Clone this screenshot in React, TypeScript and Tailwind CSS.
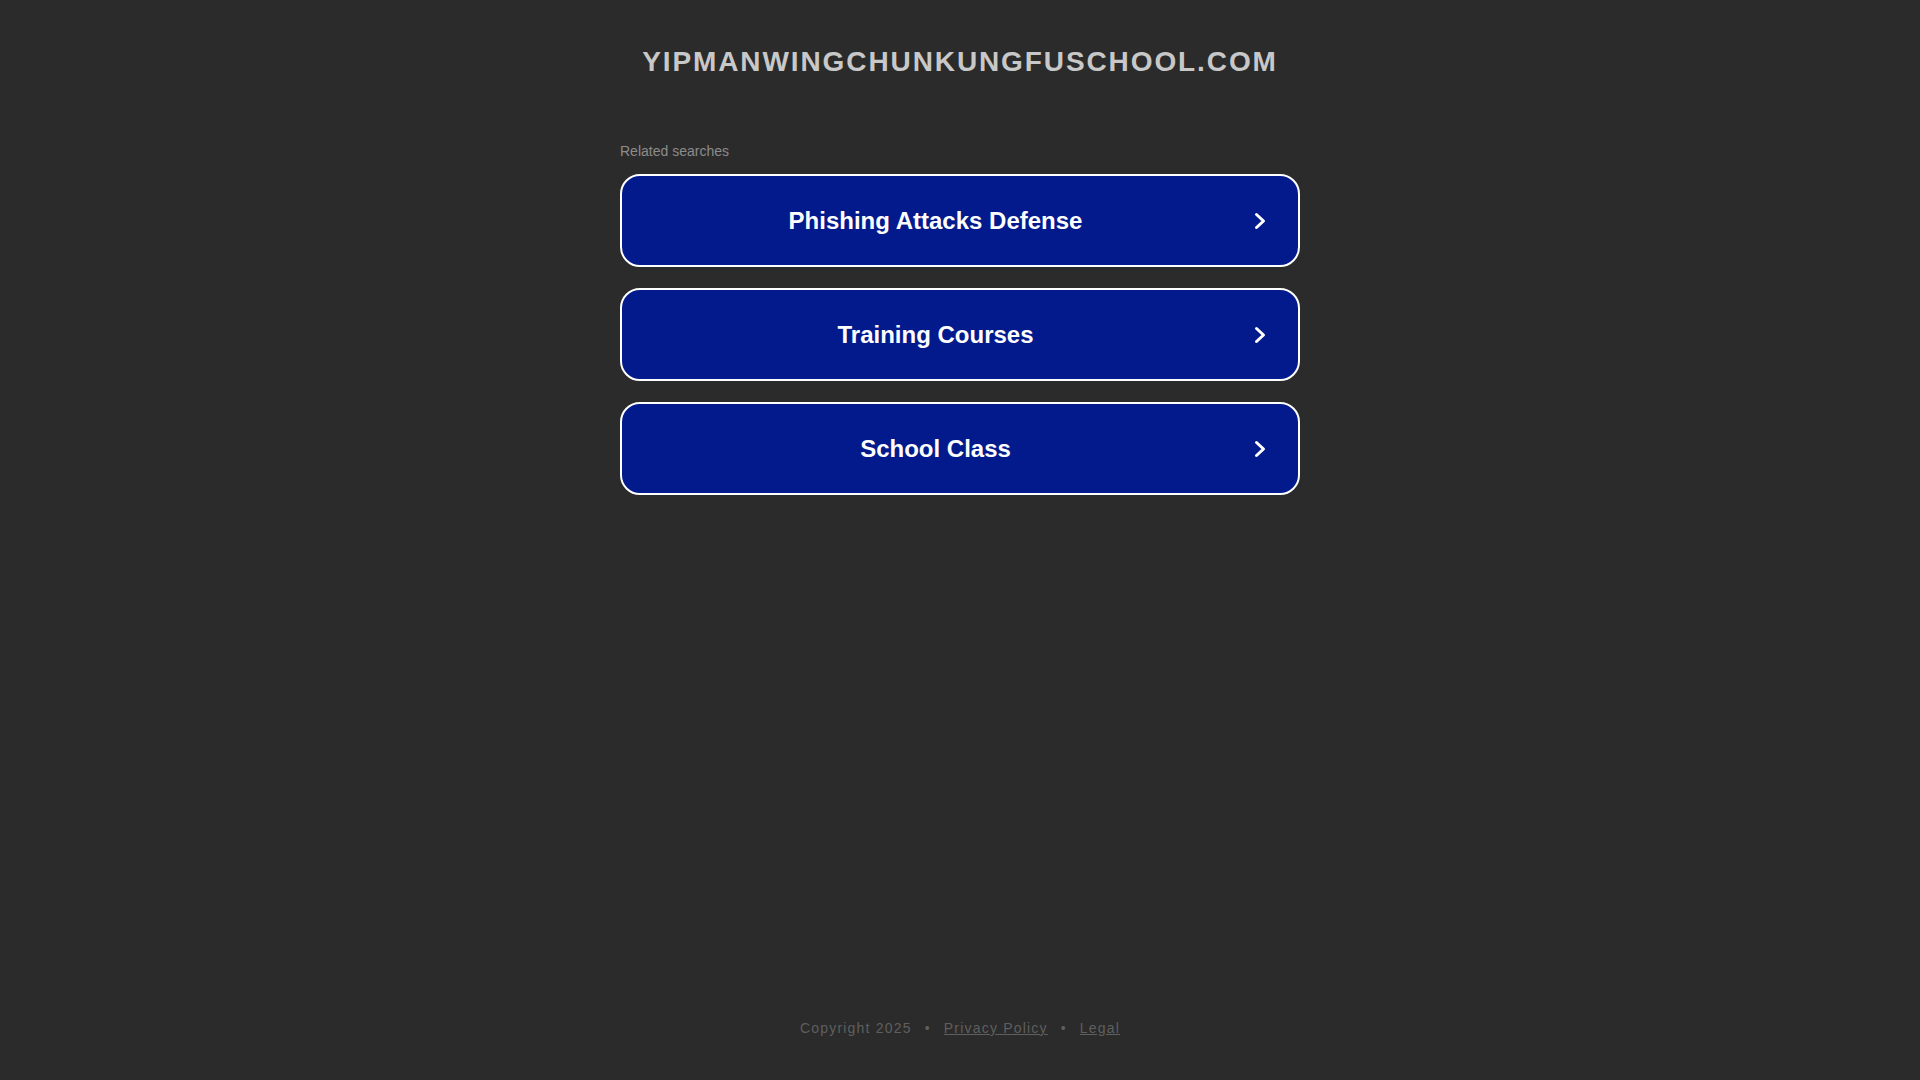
const searches = ["Phishing Attacks Defense", "Training Courses", "School Class"];

function Chevron() {
  return (
    <svg width="12" height="18" viewBox="0 0 12 18" fill="none" aria-hidden="true">
      <path
        d="M2.5 2.5 L9.5 9 L2.5 15.5"
        stroke="#ffffff"
        strokeWidth="3"
        strokeLinecap="round"
        strokeLinejoin="round"
      />
    </svg>
  );
}

export default function App() {
  return (
    <main
      className="flex min-h-screen flex-col bg-[#2b2b2b]"
      style={{ fontFamily: '"Liberation Sans", Arial, sans-serif' }}
    >
      <h1 className="mt-[46px] text-center text-[28px] font-bold leading-[32px] tracking-[1.9px] text-[#c8c8c8]">
        YIPMANWINGCHUNKUNGFUSCHOOL.COM
      </h1>

      <section className="mx-auto mt-[65px] w-[680px]">
        <p className="text-[14px] leading-[16px] text-[#8c8c8c]">Related searches</p>

        <div className="mt-[15px] flex flex-col gap-[21px]">
          {searches.map((label) => (
            <a
              key={label}
              href="#"
              className="flex h-[93px] items-center rounded-[20px] border-2 border-white bg-[#021a8c] pr-[32px]"
            >
              <span className="flex-1 pt-[1px] text-center text-[24px] font-bold leading-[28px] text-white">
                {label}
              </span>
              <span className="flex w-[17px] justify-end">
                <Chevron />
              </span>
            </a>
          ))}
        </div>
      </section>

      <footer className="mt-auto flex justify-center pb-[44px] text-[14px] leading-[16px] tracking-[1.2px] text-[#5f5f5f]">
        <span>Copyright 2025</span>
        <span className="mx-[13px]">•</span>
        <a href="#" className="underline">
          Privacy Policy
        </a>
        <span className="mx-[13px]">•</span>
        <a href="#" className="underline">
          Legal
        </a>
      </footer>
    </main>
  );
}
